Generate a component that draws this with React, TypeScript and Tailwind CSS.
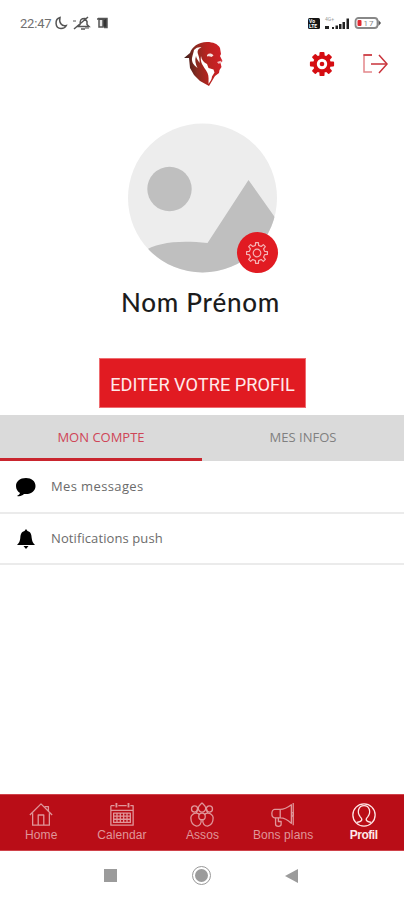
import type { ReactNode } from "react";

/** Outline of a cog with round-cornered teeth, centred on 0,0. */
function cogPath(teeth: number, outer: number, inner: number) {
  const step = (Math.PI * 2) / teeth;
  const points: string[] = [];
  for (let i = 0; i < teeth; i++) {
    const a = i * step - Math.PI / 2;
    const corners = [
      [a - step * 0.27, inner],
      [a - step * 0.17, outer],
      [a + step * 0.17, outer],
      [a + step * 0.27, inner],
    ];
    for (const [angle, r] of corners) {
      points.push(`${(r * Math.cos(angle)).toFixed(2)} ${(r * Math.sin(angle)).toFixed(2)}`);
    }
  }
  return `M${points.join("L")}Z`;
}

function StatusBar() {
  return (
    <div className="flex h-[38px] items-center justify-between pl-5 pr-[23px] pt-[8px]">
      <div className="flex items-center">
        <span className="w-[33px] font-['Roboto',sans-serif] text-[13px] leading-none tracking-[-0.2px] text-[#707070]">
          22:47
        </span>
        <svg className="ml-[1px] h-4 w-[56px]" viewBox="0 0 56 16" fill="none" stroke="#555" strokeWidth="1.5">
          <path d="M6 2.5C.5 4 .7 13.5 7 13.500c2.6 0 4.400-1 5.300-3-4.800 1.200-7.600-3.200-6.300-8Z" />
          <path d="M23 11.500l3-2c0-5 1-6 5-6l2 3v3l2 2H23M27 14h4M20 14 34 2" />
          <path d="M19 6h3M31 13h4" strokeWidth="1" />
          <path d="M44 3.500h9v9h-3" fill="#333" />
          <path d="M43 4h8M45 5v7h4V5" fill="#e5e5e5" stroke="#555" />
        </svg>
      </div>
      <svg className="h-[14px] w-[73px]" viewBox="0 0 73 14">
        <rect y="2" width="12" height="11" rx="1.5" fill="#151515" />
        <text x="1" y="7" fontSize="5" fontWeight="700" fontFamily="Roboto, sans-serif" fill="#fff">Vo</text>
        <text x="1" y="12" fontSize="5" fontWeight="700" fontFamily="Roboto, sans-serif" fill="#fff">LTE</text>
        <text x="17" y="5" fontSize="5" fontFamily="Roboto, sans-serif" fill="#999">4G+</text>
        <path d="M17 10h4v3h-4zM24 11h2v2h-2zM27.500 9.500h2.500v3.500h-2.500zM31 8h2.500v5H31zM34.500 6h2.500v7h-2.500zM38.500 2.500H41V13h-2.500z" fill="#222" />
        <rect x="47.5" y="2" width="22" height="10" rx="3" fill="#fff" stroke="#888" strokeWidth="1.8" />
        <path d="M70.500 4v6l2.500-3z" fill="#555" />
        <rect x="49.500" y="4" width="4" height="6" rx="1" fill="#e02a32" />
        <text x="55.5" y="10" fontSize="8" fontFamily="Roboto, sans-serif" letterSpacing="1" fill="#888">17</text>
      </svg>
    </div>
  );
}

function LionLogo() {
  return (
    <svg className="h-[46px] w-[40px]" viewBox="0 0 40 46">
      <defs>
        <linearGradient id="mane" x1="0" x2="1" y1=".3" y2=".2">
          <stop offset="0" stopColor="#3b1e1c" />
          <stop offset=".3" stopColor="#8a2a20" />
          <stop offset=".6" stopColor="#b8231f" />
          <stop offset="1" stopColor="#d21f28" />
        </linearGradient>
      </defs>
      <path
        d="M1 17 7 12C9 6 15 1 24 1c6 0 11 2 13 6l1 6-1 2 2.500 5-2 2 1 4-2 3-.5 3-4 3-6 10-9-5-6-6-4-7-1-10Z"
        fill="url(#mane)"
      />
      <g fill="#fff">
        <path d="M11 9c3-3 5-3 7.500-2.500-3.500 1-4.500 3.500-3.500 6.500 1 3 2 6 1.500 9-1.500-3-3-4-3.500-7-1.500 4-.5 8 1.500 12-4-3-6-6-5.500-10 .5-3 1.500-5 2-8Z" />
        <path d="M18 15c.5 4 3 6.500 6 8l1.500 4 5 1.500 1 3-2.500 4c0 3-2 5-3.500 7.500 0-4 .5-8-1-11-2-4-4-6-5.500-9-1.200-3-1.500-5-1-8Z" />
        <path d="M24 14c2-2 4.500-2 6.500.5l-2 1.500c-1.500-1-3-1-4.500-.5Z" opacity=".85" />
        <path d="M34 21l4.500-1.500-.5 2.500-2.500.8Z" opacity=".7" />
      </g>
    </svg>
  );
}

function Header() {
  return (
    <header className="grid h-[52px] grid-cols-[183px_40px_1fr] items-center">
      <span />
      <LionLogo />
      <div className="flex items-center justify-end gap-[27px] pr-[16px]">
        <svg className="h-[26px] w-[26px]" viewBox="-13 -13 26 26">
          <path d={cogPath(8, 11.2, 8)} fill="#d50d12" stroke="#d50d12" strokeWidth="2" strokeLinejoin="round" />
          <circle r="5.2" fill="#fff" />
          <circle r="2.3" fill="#d50d12" />
        </svg>
        <svg className="h-[22px] w-[26px]" viewBox="0 0 26 22" fill="none" stroke="#c9333b" strokeWidth="1.5">
          <path d="M10 2H2v17h8" stroke="#e4878b" />
          <path d="M1.500 2H10M9 11h15" />
          <path d="m17 2 8 9-8 9" />
        </svg>
      </div>
    </header>
  );
}

function Avatar() {
  return (
    <div className="relative mt-[33px] h-[150px] w-[151px]">
      <svg className="h-full w-full" viewBox="0 0 150 150">
        <clipPath id="round">
          <circle cx="75" cy="75" r="74.5" />
        </clipPath>
        <g clipPath="url(#round)">
          <rect width="150" height="150" fill="#ededed" />
          <circle cx="42" cy="66" r="22.2" fill="#bfbfbf" />
          <path d="M15 129C30 119 52 117 80 120L121 57 150 98V150H15Z" fill="#bfbfbf" />
        </g>
      </svg>
      <button className="absolute bottom-0 right-0 flex h-[41px] w-[41px] items-center justify-center rounded-full bg-[#e11b22]">
        <svg className="h-6 w-6" viewBox="-12 -12 24 24" fill="none" stroke="#f5b3b5" strokeWidth="1.2" strokeLinejoin="round">
          <path d={cogPath(8, 10.5, 7.8)} />
          <circle r="3.8" />
        </svg>
      </button>
    </div>
  );
}

function Tabs() {
  return (
    <div className="mt-[7px] grid h-[46px] grid-cols-2 bg-[#dadada] font-['Open_Sans',sans-serif] text-[13px]">
      <button className="border-b-3 border-[#c9252e] pt-[3px] text-[#cf4557]">MON COMPTE</button>
      <button className="border-b-3 border-transparent pt-[3px] text-[#808080]">MES INFOS</button>
    </div>
  );
}

function Row({ icon, label, className }: { icon: ReactNode; label: string; className: string }) {
  return (
    <li className="flex items-center border-b-2 border-[#ebebeb] pl-[15px] odd:h-[53px] even:h-[51px]">
      <svg className="h-[22px] w-[22px]" viewBox="0 0 22 22" fill="#000">
        {icon}
      </svg>
      <span className={`ml-[14px] font-['Open_Sans',sans-serif] text-[13px] text-[#6b6b6b] ${className}`}>{label}</span>
    </li>
  );
}

const navItems = [
  {
    label: "Home",
    icon: <path d="M2 14 14 2l12 12M5 12v13h18V12M11 25V14h6v11M18 5h4v5" />,
  },
  {
    label: "Calendar",
    icon: (
      <>
        <path d="M2 4h4M10 4h9M23 4h3v21H2V4M2 9h24" />
        <path d="M8 1v5M21 1v5" strokeWidth="2" />
        <path d="M5 12h18v10H5ZM5 15.300h18M5 18.600h18M8.600 12v10M12.200 12v10M15.800 12v10M19.400 12v10" />
      </>
    ),
  },
  {
    label: "Assos",
    icon: (
      <>
        <path d="M14 1c-2 2-4 3-4 6 0 2 2 4 4 4s4-2 4-4c0-3-2-4-4-6Z" />
        <circle cx="6" cy="7.500" r="3.300" />
        <circle cx="22" cy="7.500" r="3.300" />
        <circle cx="14" cy="15.500" r="3.500" />
        <path d="M13 19c1 4-2 7-5 7-4-1-6-5-6-9 0-3 3-5 6-5 2 0 3 1 3.500 2M15 19c-1 4 2 7 5 7 4-1 6-5 6-9 0-3-3-5-6-5-2 0-3 1-3.500 2M9 8l-1 4M19 8l1 4" />
      </>
    ),
  },
  {
    label: "Bons plans",
    icon: (
      <>
        <path d="M23 3v20c-4-4-7-6-12-6H5c-4 0-4-9 0-9h6c5 0 8-2 12-5ZM11 8v9M23 10c3 1 3 5 0 6" />
        <path d="M6 17v7c0 3 6 3 6 0v-3H9v-4M25 1v24" />
      </>
    ),
  },
  {
    label: "Profil",
    active: true,
    icon: (
      <>
        <circle cx="14" cy="14" r="12" />
        <path d="M6 22c6-1 7-3 4-6-4-5-2-12 4-12s8 7 4 12c-3 3-2 5 4 6" />
      </>
    ),
  },
];

function BottomNav() {
  return (
    <nav className="mt-auto grid h-[57px] shrink-0 grid-cols-5 border-y border-[#cf424a] bg-[#b90d17] pl-px font-['Liberation_Sans',sans-serif] text-[12px]">
      {navItems.map((item) => (
        <a
          key={item.label}
          className={`flex flex-col items-center pt-[7px] leading-none ${item.active ? "font-bold tracking-[-0.5px] text-[#ffe7e7]" : "tracking-[0.1px] text-[#e0969a]"}`}
        >
          <svg
            className="h-[26px] w-[26px]"
            viewBox="0 0 28 28"
            fill="none"
            stroke="currentColor"
            strokeWidth="1.4"
            strokeLinejoin="round"
          >
            {item.icon}
          </svg>
          <span className="mt-px whitespace-nowrap">{item.label}</span>
        </a>
      ))}
    </nav>
  );
}

function SystemNav() {
  return (
    <div className="flex h-[49px] shrink-0 items-center justify-between pl-[104px] pr-[106px]">
      <span className="h-[13px] w-[13px] bg-[#9b9b9b]" />
      <span className="flex h-[19px] w-[19px] items-center justify-center rounded-full border border-[#999]">
        <span className="h-[13px] w-[13px] rounded-full bg-[#9b9b9b]" />
      </span>
      <svg className="h-[14px] w-[13px]" viewBox="0 0 13 14">
        <path d="M0 7 13 0v14Z" fill="#9b9b9b" />
      </svg>
    </div>
  );
}

export default function App() {
  return (
    <div className="flex h-[900px] w-[404px] flex-col overflow-hidden bg-white">
      <StatusBar />
      <Header />
      <main>
        <section className="flex flex-col items-center">
          <Avatar />
          <h1 className="mt-[13px] h-8 whitespace-nowrap pr-[3px] font-['Lato',sans-serif] text-[26px] font-medium leading-8 tracking-[0.75px] text-[#1c1c1c]">
            Nom Prénom
          </h1>
          <button className="mt-[40px] h-[50px] w-[207px] whitespace-nowrap border border-[#ee6c70] bg-[#e11b22] pl-px pt-[3px] font-['Roboto',sans-serif] text-[18.2px] text-[#ffe9e9]">
            EDITER VOTRE PROFIL
          </button>
        </section>
        <Tabs />
        <ul>
          <Row
            label="Mes messages"
            className="tracking-[0.38px]"
            icon={<path d="M11 2C5 2 1 5.500 1 10c0 3 1.500 5.500 4 7-.5 1.500-1.500 2-3 3 3 .8 5-.3 7-2 7 .8 11.500-3 11.500-8S16.500 2 11 2Z" />}
          />
          <Row
            label="Notifications push"
            className="tracking-[0.1px]"
            icon={<path d="M11 1 9.500 3C6 4 5.500 7 5.300 10c-.2 3-1.300 5-3.300 7h18c-2-2-3.100-4-3.300-7-.2-3-.7-6-4.200-7ZM8.500 18h5L11 21Z" />}
          />
        </ul>
      </main>
      <BottomNav />
      <SystemNav />
    </div>
  );
}
